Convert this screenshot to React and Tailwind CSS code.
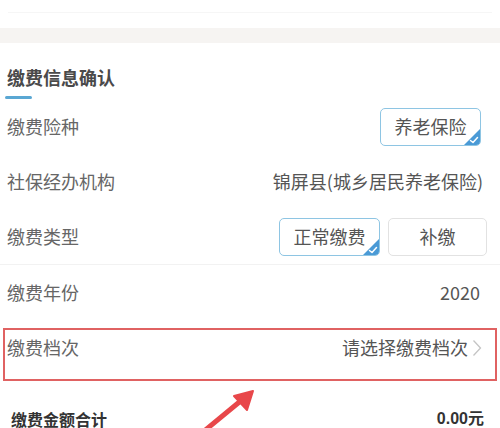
import React from "react";

const font = { fontFamily: '"Noto Sans CJK SC", "Noto Sans", sans-serif' };

function Corner() {
  return (
    <svg className="absolute right-0 bottom-0" width="16" height="16" viewBox="0 0 16 16">
      <path d="M16 0 L16 12 Q16 16 12 16 L0 16 Z" fill="#4a9ad6" />
      <path d="M6.5 11.5 L9 13.5 L13.5 8.5" fill="none" stroke="#fff" strokeWidth="1.5" strokeLinecap="round" strokeLinejoin="round" />
    </svg>
  );
}

function Btn({ children, selected, w }) {
  return (
    <div
      className={
        "relative h-[38px] flex items-center justify-center rounded-[5px] border-[1.5px] text-[18px] text-[#555] bg-white " +
        (selected ? "border-[#8ec5e3]" : "border-[#e2e2e2]")
      }
      style={{ width: w }}
    >
      {children}
      {selected && <Corner />}
    </div>
  );
}

export default function App() {
  return (
    <div className="relative w-[500px] h-[428px] overflow-hidden bg-white" style={font}>
      <div className="h-[28px] flex items-start pt-[12px] px-[8px]">
        <div className="h-px w-full bg-[#f6f6f6]" />
      </div>
      <div className="h-[15px] bg-[#f6f4f2]" />
      <div className="pt-[22px]">
        <div className="pl-[7px] h-[24px] leading-[24px] text-[18px] font-bold text-[#4a4a4a]">缴费信息确认</div>
        <div className="ml-[5px] mt-[7px] h-[3px] w-[27px] bg-[#5aa7d3] rounded-full" />
      </div>
      <div className="h-[55px] flex items-center justify-between pl-[7px] pr-[19px]">
        <span className="text-[18px] text-[#666]">缴费险种</span>
        <Btn selected w={101}>养老保险</Btn>
      </div>
      <div className="h-[55px] flex items-center justify-between pl-[7px] pr-[17px]">
        <span className="text-[18px] text-[#666]">社保经办机构</span>
        <span className="text-[18px] text-[#555]">锦屏县(城乡居民养老保险)</span>
      </div>
      <div className="h-[56px] flex items-center justify-between pl-[7px] pr-[13px] border-b border-[#f2f2f2] ml-[0px]">
        <span className="text-[18px] text-[#666]">缴费类型</span>
        <div className="flex gap-[8px]">
          <Btn selected w={101}>正常缴费</Btn>
          <Btn w={99}>补缴</Btn>
        </div>
      </div>
      <div className="h-[55px] flex items-center justify-between pl-[7px] pr-[20px]">
        <span className="text-[18px] text-[#666]">缴费年份</span>
        <span className="text-[18px] text-[#555]">2020</span>
      </div>
      <div className="relative h-[55px] flex items-center justify-between pl-[7px] pr-[18px]">
        <span className="text-[18px] text-[#666]">缴费档次</span>
        <span className="flex items-center gap-[4px] text-[18px] text-[#555]">
          请选择缴费档次
          <svg width="10" height="18" viewBox="0 0 10 18">
            <path d="M1.5 1.5 L8.5 9 L1.5 16.5" fill="none" stroke="#c4c4c4" strokeWidth="1.3" />
          </svg>
        </span>
        <div className="absolute left-[3px] right-[3px] top-[8px] h-[53px] border-[2.5px] border-[#e06262]" />
      </div>
      <div className="mt-[17px] h-[54px] flex items-center justify-between pl-[11px] pr-[16px]">
        <span className="text-[16px] font-bold text-[#333]">缴费金额合计</span>
        <span className="text-[16px] font-bold text-[#333]" style={{ fontFamily: '"Liberation Sans", "Noto Sans CJK SC", sans-serif' }}>0.00元</span>
      </div>
      <svg className="absolute left-0 top-0 pointer-events-none" width="500" height="428" viewBox="0 0 500 428">
        <line x1="203" y1="432" x2="243" y2="399" stroke="#e8474a" strokeWidth="5" strokeLinecap="round" />
        <path d="M253 391 L234 396 L247 410 Z" fill="#e8474a" stroke="#e8474a" strokeWidth="2" strokeLinejoin="round" />
      </svg>
    </div>
  );
}
